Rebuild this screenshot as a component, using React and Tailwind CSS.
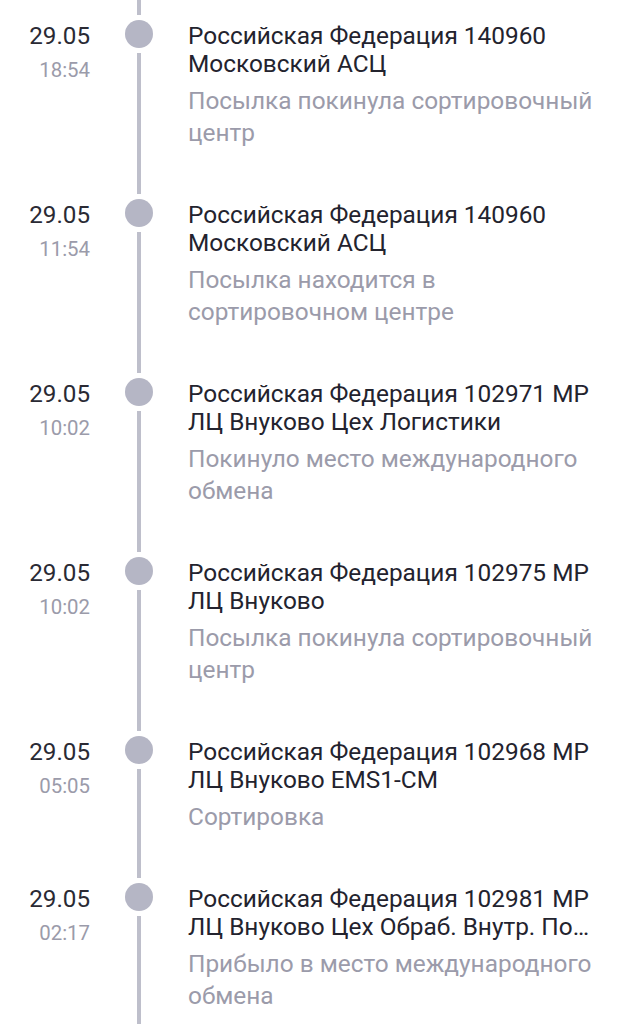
import React from "react";

const events = [
  {
    date: "29.05",
    time: "18:54",
    place: "Российская Федерация 140960 Московский АСЦ",
    status: "Посылка покинула сортировочный центр",
  },
  {
    date: "29.05",
    time: "11:54",
    place: "Российская Федерация 140960 Московский АСЦ",
    status: "Посылка находится в сортировочном центре",
  },
  {
    date: "29.05",
    time: "10:02",
    place: "Российская Федерация 102971 МР ЛЦ Внуково Цех Логистики",
    status: "Покинуло место международного обмена",
  },
  {
    date: "29.05",
    time: "10:02",
    place: "Российская Федерация 102975 МР ЛЦ Внуково",
    status: "Посылка покинула сортировочный центр",
  },
  {
    date: "29.05",
    time: "05:05",
    place: "Российская Федерация 102968 МР ЛЦ Внуково EMS1-CM",
    status: "Сортировка",
  },
  {
    date: "29.05",
    time: "02:17",
    place: "Российская Федерация 102981 МР ЛЦ Внуково Цех Обраб. Внутр. По…",
    status: "Прибыло в место международного обмена",
  },
];

const Row = ({ item }) => {
  return (
    <div className="flex items-stretch">
      {/* date + time */}
      <div className="w-[90px] shrink-0 pt-[22px] text-right">
        <div className="text-[24.2px] leading-[28px] text-[#2a2a34]">{item.date}</div>
        <div className="mt-[6px] text-[20.4px] leading-[28px] text-[#9b9baa]">{item.time}</div>
      </div>

      {/* timeline */}
      <div className="ml-[35px] flex w-[28px] shrink-0 flex-col items-center">
        <div className="h-[15px] w-[4px] bg-[#bebfcb]" />
        <div className="mt-[5px] h-[28px] w-[28px] rounded-full bg-[#b5b6c5]" />
        <div className="mt-[5px] w-[4px] flex-1 bg-[#bebfcb]" />
      </div>

      {/* content */}
      <div className="ml-[35px] w-[416px] pt-[22px] pb-[30px]">
        <div className="text-[24.4px] leading-[28px] text-[#23232e]">{item.place}</div>
        <div className="mt-[7px] text-[24.4px] leading-[32px] text-[#9b9baa]">{item.status}</div>
      </div>
    </div>
  );
};

const App = () => {
  return (
    <div
      className="h-[1024px] w-full overflow-hidden bg-white"
      style={{ fontFamily: "Roboto, 'Noto Sans', sans-serif" }}
    >
      {events.map((item, i) => (
        <Row key={i} item={item} />
      ))}
    </div>
  );
};

export default App;
